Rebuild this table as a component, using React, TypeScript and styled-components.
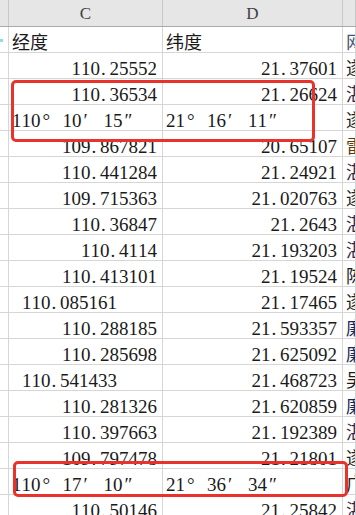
import styled, { createGlobalStyle } from "styled-components";

const GlobalStyle = createGlobalStyle`
  html, body {
    margin: 0;
    padding: 0;
    background: #ffffff;
    overflow: hidden;
  }
`;

type RowData = {
  c: string;
  d: string;
  e: string;
  align?: "left" | "right";
  indent?: boolean;
  tint?: string;
};

const rows: RowData[] = [
  { c: "110.25552", d: "21.37601", e: "遂" },
  { c: "110.36534", d: "21.26624", e: "湛", tint: "#3a1f45" },
  { c: "110°10′15″", d: "21°16′11″", e: "遂", align: "left" },
  { c: "109.867821", d: "20.65107", e: "雷", tint: "#5a3a12" },
  { c: "110.441284", d: "21.24921", e: "湛", tint: "#3a1f45" },
  { c: "109.715363", d: "21.020763", e: "遂" },
  { c: "110.36847", d: "21.2643", e: "湛", tint: "#3a1f45" },
  { c: "110.4114", d: "21.193203", e: "湛", tint: "#3a1f45" },
  { c: "110.413101", d: "21.19524", e: "陈" },
  { c: "110.085161", d: "21.17465", e: "遂", indent: true },
  { c: "110.288185", d: "21.593357", e: "廉", tint: "#16275a" },
  { c: "110.285698", d: "21.625092", e: "廉", tint: "#16275a" },
  { c: "110.541433", d: "21.468723", e: "吴", indent: true },
  { c: "110.281326", d: "21.620859", e: "廉", tint: "#16275a" },
  { c: "110.397663", d: "21.192389", e: "湛", tint: "#3a1f45" },
  { c: "109.797478", d: "21.21801", e: "遂" },
  { c: "110°17′10″", d: "21°36′34″", e: "广", align: "left" },
  { c: "110.50146", d: "21.25842", e: "湛", tint: "#3a1f45" },
];

// SimSun-like cell text: half-width digits and dot, full-width angle marks
const CellText = ({ value }: { value: string }) => (
  <>
    {value.split("").map((ch, i) => {
      if (ch === ".") return <Dot key={i}>.</Dot>;
      if (ch === "°" || ch === "′" || ch === "″") return <Mark key={i}>{ch}</Mark>;
      return <Digit key={i}>{ch}</Digit>;
    })}
  </>
);

const App = () => {
  return (
    <>
      <GlobalStyle />
      <Sheet>
        <HeaderRow>
          <HeadCell />
          <HeadCell>C</HeadCell>
          <HeadCell>D</HeadCell>
          <HeadCell />
        </HeaderRow>
        <Row>
          <Cell>
            <Tick />
          </Cell>
          <Cell $align="left">
            <Label>经度</Label>
          </Cell>
          <Cell $align="left">
            <Label>纬度</Label>
          </Cell>
          <Cell $align="left">
            <Label style={{ color: "#4a5670" }}>网</Label>
          </Cell>
        </Row>
        {rows.map((row, index) => (
          <Row key={index}>
            <Cell />
            <Cell $align={row.indent ? "left" : row.align ?? "right"} $indent={row.indent}>
              <CellText value={row.c} />
            </Cell>
            <Cell $align={row.align ?? "right"}>
              <CellText value={row.d} />
            </Cell>
            <Cell $align="left">
              <Label style={{ color: row.tint ?? "#1e1e1e" }}>{row.e}</Label>
            </Cell>
          </Row>
        ))}
        <Highlight $left={11} $top={80} $width={304} $height={62} />
        <Highlight $left={13} $top={461} $width={335} $height={36} />
      </Sheet>
    </>
  );
};

export default App;

const Sheet = styled.div`
  position: relative;
  width: 356px;
  height: 515px;
  overflow: hidden;
  background: #ffffff;
  font-family: "Liberation Serif", "Noto Sans CJK SC", serif;
  color: #1a1a1a;
`;

const HeaderRow = styled.div`
  display: grid;
  grid-template-columns: 9px 154px 180px 1fr;
  height: 27px;
  background: #e6e6e6;
  border-bottom: 1px solid #a9a9a9;
  box-sizing: border-box;
`;

const HeadCell = styled.div`
  display: flex;
  align-items: center;
  justify-content: center;
  border-right: 1px solid #c9c9c9;
  font-size: 17px;
  color: #3f3f3f;
  padding-top: 1px;
`;

const Row = styled.div`
  display: grid;
  grid-template-columns: 9px 154px 180px 1fr;
  height: 26px;
`;

const Cell = styled.div<{ $align?: "left" | "right"; $indent?: boolean }>`
  position: relative;
  display: flex;
  align-items: flex-start;
  justify-content: ${(p) => (p.$align === "left" ? "flex-start" : "flex-end")};
  padding: 6px ${(p) => (p.$align === "left" ? "0" : "5px")} 0
    ${(p) => (p.$indent ? "13px" : p.$align === "left" ? "3px" : "0")};
  border-right: 1px solid #d6d6d6;
  border-bottom: 1px solid #d6d6d6;
  box-sizing: border-box;
  overflow: hidden;
  white-space: nowrap;
  font-size: 19px;
  line-height: 19px;
`;

const Digit = styled.span`
  display: inline-block;
  width: 9.5px;
  text-align: center;
`;

const Dot = styled.span`
  display: inline-block;
  width: 9.5px;
  text-align: left;
  padding-left: 1px;
  box-sizing: border-box;
`;

const Mark = styled.span`
  display: inline-block;
  width: 22px;
  text-align: left;
  padding-left: 2px;
  box-sizing: border-box;
`;

const Label = styled.span`
  font-family: "Noto Sans CJK SC", sans-serif;
  font-size: 18px;
  line-height: 18px;
  margin-top: -1px;
`;

const Tick = styled.span`
  position: absolute;
  left: 0;
  top: 12px;
  width: 3px;
  height: 3px;
  background: #8fe0df;
`;

const Highlight = styled.div<{ $left: number; $top: number; $width: number; $height: number }>`
  position: absolute;
  left: ${(p) => p.$left}px;
  top: ${(p) => p.$top}px;
  width: ${(p) => p.$width}px;
  height: ${(p) => p.$height}px;
  border: 3px solid #e8322b;
  border-radius: 5px;
  box-sizing: border-box;
  pointer-events: none;
`;
